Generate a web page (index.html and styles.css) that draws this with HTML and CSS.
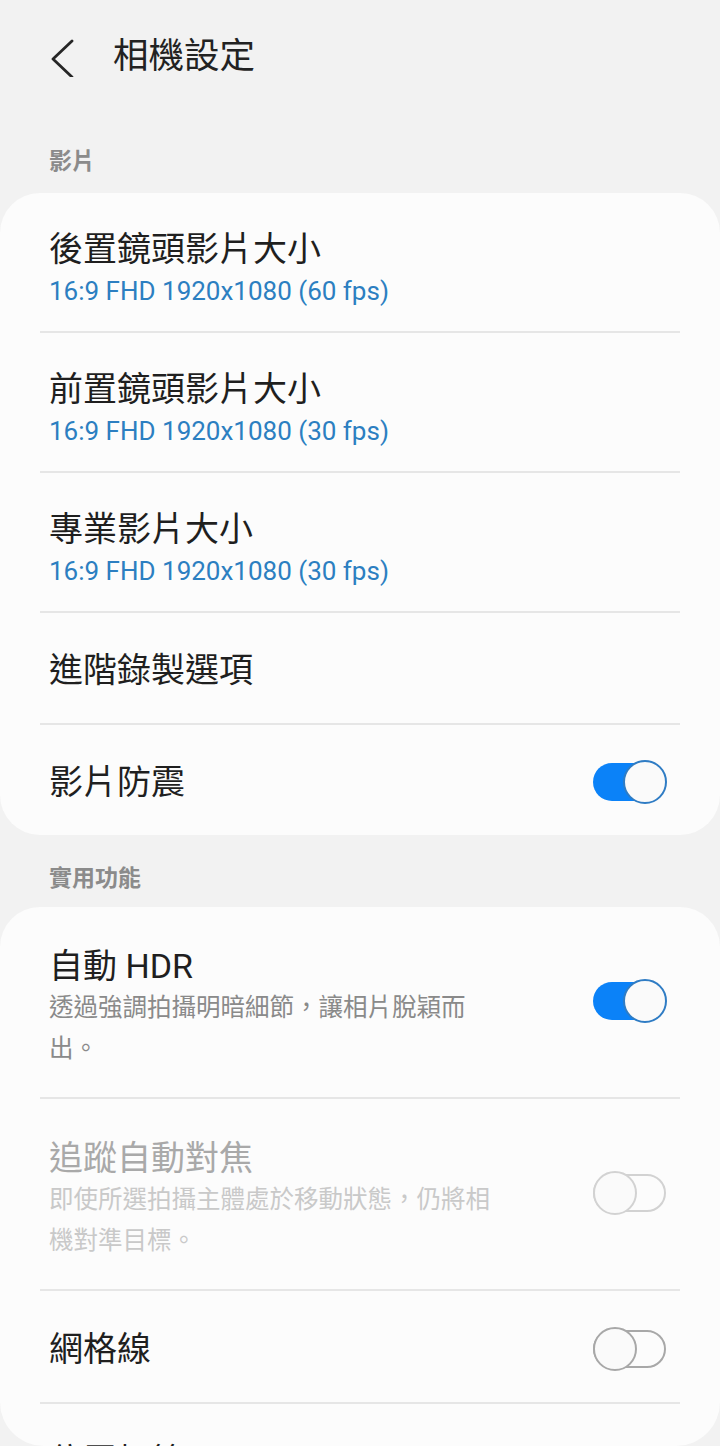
FILE: index.html
```html
<!DOCTYPE html>
<html lang="zh-Hant">
<head>
<meta charset="utf-8">
<link rel="stylesheet" href="styles.css">
</head>
<body>
<div class="screen">
  <header class="appbar">
    <svg class="back" width="30" height="44" viewBox="0 0 30 44">
      <path d="M24 8 L5 26 L24 44" fill="none" stroke="#262626" stroke-width="2.8" stroke-linecap="round" stroke-linejoin="round"/>
    </svg>
    <h1 class="title">相機設定</h1>
  </header>
  <div class="content">
    <div class="section-label">影片</div>
    <div class="card">
      <div class="row two">
        <div class="text">
          <div class="row-title">後置鏡頭影片大小</div>
          <div class="row-sub">16:9 FHD 1920x1080 (60 fps)</div>
        </div>
      </div>
      <div class="divider"></div>
      <div class="row two">
        <div class="text">
          <div class="row-title">前置鏡頭影片大小</div>
          <div class="row-sub">16:9 FHD 1920x1080 (30 fps)</div>
        </div>
      </div>
      <div class="divider"></div>
      <div class="row two">
        <div class="text">
          <div class="row-title">專業影片大小</div>
          <div class="row-sub">16:9 FHD 1920x1080 (30 fps)</div>
        </div>
      </div>
      <div class="divider"></div>
      <div class="row one">
        <div class="text">
          <div class="row-title">進階錄製選項</div>
        </div>
      </div>
      <div class="divider"></div>
      <div class="row one">
        <div class="text">
          <div class="row-title">影片防震</div>
        </div>
        <div class="toggle on"><span class="thumb"></span></div>
      </div>
    </div>

    <div class="section-label second">實用功能</div>
    <div class="card">
      <div class="row three">
        <div class="text narrow">
          <div class="row-title">自動 HDR</div>
          <div class="row-desc">透過強調拍攝明暗細節，讓相片脫穎而<br>出。</div>
        </div>
        <div class="toggle on"><span class="thumb"></span></div>
      </div>
      <div class="divider"></div>
      <div class="row three disabled">
        <div class="text narrow">
          <div class="row-title">追蹤自動對焦</div>
          <div class="row-desc">即使所選拍攝主體處於移動狀態，仍將相<br>機對準目標。</div>
        </div>
        <div class="toggle off dis"><span class="thumb"></span></div>
      </div>
      <div class="divider"></div>
      <div class="row one grid">
        <div class="text">
          <div class="row-title">網格線</div>
        </div>
        <div class="toggle off"><span class="thumb"></span></div>
      </div>
      <div class="divider"></div>
      <div class="row one">
        <div class="text">
          <div class="row-title">位置標籤</div>
        </div>
      </div>
    </div>
  </div>
</div>
</body>
</html>
```

FILE: styles.css
```css
* { box-sizing: border-box; }
html, body { margin: 0; padding: 0; }
body {
  background: #f2f2f2;
  font-family: Roboto, "Noto Sans CJK TC", sans-serif;
  color: #1f1f1f;
}
.screen {
  width: 720px;
  height: 1446px;
  overflow: hidden;
  display: flex;
  flex-direction: column;
}
.appbar {
  height: 116px;
  flex: none;
  display: flex;
  align-items: center;
  padding-left: 48px;
}
.back {
  display: block;
  margin-top: -6px;
}
.title {
  margin: -2px 0 0 35px;
  font-size: 35.5px;
  font-weight: 400;
  color: #222;
  line-height: 1;
}
.content {
  flex: 1;
  overflow: hidden;
  border-radius: 0 0 44px 44px;
}
.section-label {
  height: 77px;
  padding: 30px 0 0 49px;
  font-size: 23px;
  font-weight: 700;
  color: #8b8b8b;
  line-height: 32px;
}
.section-label.second {
  height: 72px;
  padding-top: 28px;
}
.card {
  background: #fcfcfc;
  border-radius: 40px;
}
.row {
  display: flex;
  align-items: center;
  padding: 0 54px 0 49px;
}
.row.two {
  height: 138px;
  padding-top: 16px;
}
.row.one { height: 110px; padding-top: 4px; }
.row.one.grid { height: 111px; }
.row.three { height: 190px; padding-top: 9px; }
.text { flex: 1; min-width: 0; }
.text.narrow { flex: none; width: 490px; }
.row-title {
  font-size: 34px;
  line-height: 42px;
  color: #1f1f1f;
}
.row-sub {
  font-size: 26px;
  line-height: 42px;
  color: #2c7fc1;
}
.row-desc {
  font-size: 24.5px;
  line-height: 41px;
  color: #8a8a8a;
}
.row.disabled .row-title { color: #a9a9a9; }
.row.disabled .row-desc { color: #c9c9c9; }
.divider {
  height: 2px;
  background: #e6e6e6;
  margin: 0 40px;
}
.toggle {
  flex: none;
  position: relative;
  width: 73px;
  height: 38px;
  border-radius: 19px;
  margin-left: auto;
}
.row.three .toggle { margin-top: -11px; }
.toggle.on { background: #0b82f8; }
.toggle.off {
  border: 2px solid #a8a8a8;
}
.toggle.off.dis { border-color: #d2d2d2; }
.toggle .thumb {
  position: absolute;
  top: -3px;
  width: 44px;
  height: 44px;
  border-radius: 50%;
  background: #fafafa;
}
.toggle.on .thumb {
  right: -1px;
  border: 2px solid #2f7cc4;
}
.toggle.off .thumb {
  left: -2px;
  top: -5px;
  border: 2px solid #a8a8a8;
}
.toggle.off.dis .thumb { border-color: #d2d2d2; }
```
